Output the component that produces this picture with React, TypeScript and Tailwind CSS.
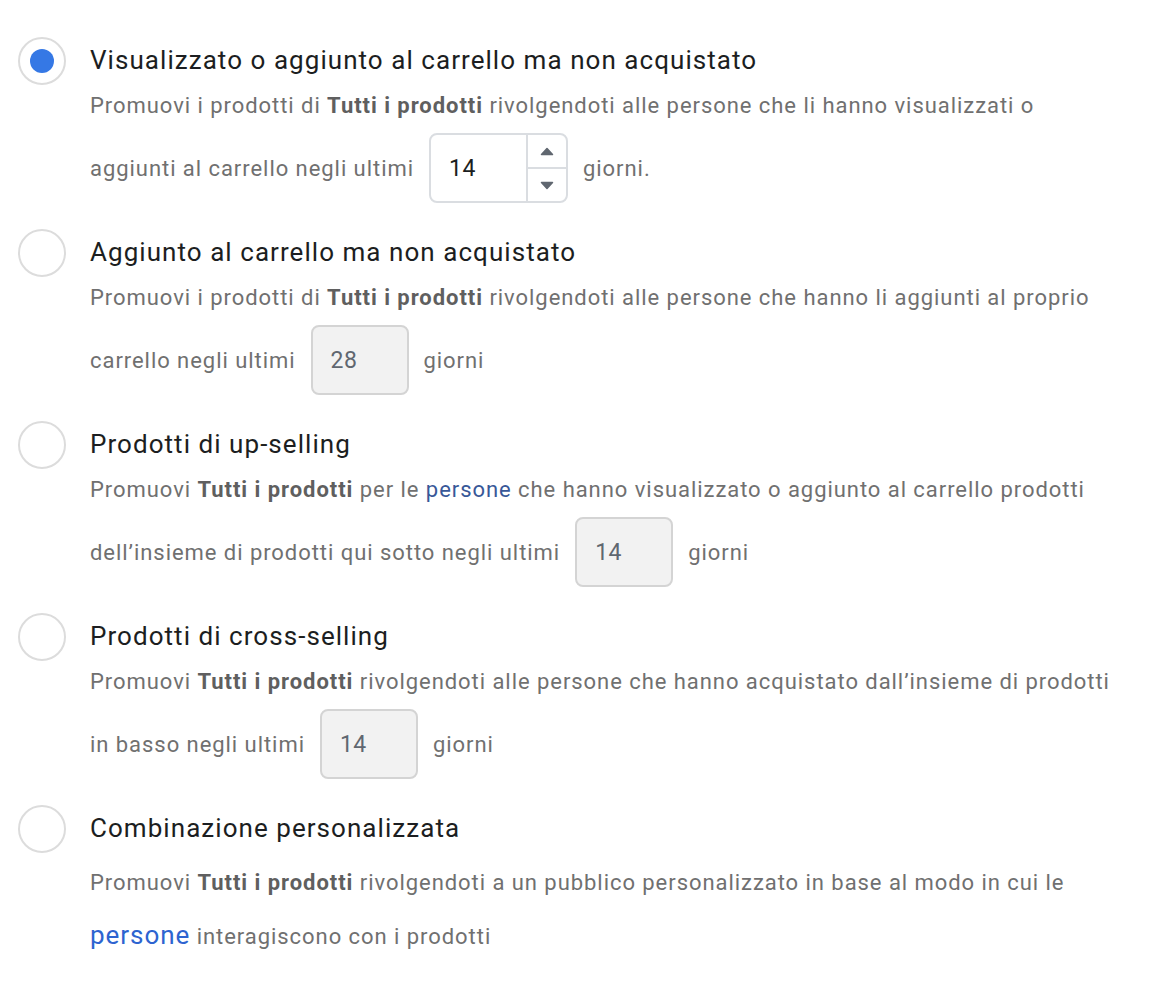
import React, { useState } from 'react';

type Option = {
  title: string;
  line1: React.ReactNode;
  line2: React.ReactNode;
  days?: number;
  after?: string;
  last?: boolean;
};

const B = ({ children }: { children: React.ReactNode }) => (
  <span className="font-bold text-[#5f5f5f]">{children}</span>
);

const Radio = ({ checked }: { checked: boolean }) => (
  <div className="w-12 h-12 shrink-0 rounded-full border-2 border-[#dcdcdc] bg-white flex items-center justify-center">
    {checked && <div className="w-6 h-6 rounded-full bg-[#3578e5]" />}
  </div>
);

const Spinner = ({ value }: { value: number }) => (
  <div className="flex h-[70px] w-[139px] rounded-lg border-2 border-[#dadde1] bg-white">
    <div className="flex-1 flex items-center pl-[18px] pt-[2px] text-[23px] tracking-[0.5px] text-[#1c1e21]">{value}</div>
    <div className="w-[40px] flex flex-col border-l-2 border-[#dadde1]">
      <div className="flex-1 flex items-center justify-center border-b-2 border-[#dadde1]">
        <svg width="14" height="9" viewBox="0 0 14 9">
          <path d="M7 1.5 L12.5 7.5 H1.5 Z" fill="#606770" stroke="#606770" strokeWidth="1.5" strokeLinejoin="round" />
        </svg>
      </div>
      <div className="flex-1 flex items-center justify-center">
        <svg width="14" height="9" viewBox="0 0 14 9">
          <path d="M7 7.5 L12.5 1.5 H1.5 Z" fill="#606770" stroke="#606770" strokeWidth="1.5" strokeLinejoin="round" />
        </svg>
      </div>
    </div>
  </div>
);

const Disabled = ({ value }: { value: number }) => (
  <div className="flex items-center h-[70px] w-[98px] rounded-lg border-2 border-[#d4d4d4] bg-[#f2f2f2] pl-[18px] pt-[2px] text-[23px] tracking-[0.5px] text-[#606770]">
    {value}
  </div>
);

const options: Option[] = [
  {
    title: 'Visualizzato o aggiunto al carrello ma non acquistato',
    line1: (<>Promuovi i prodotti di <B>Tutti i prodotti</B> rivolgendoti alle persone che li hanno visualizzati o</>),
    line2: 'aggiunti al carrello negli ultimi',
    days: 14,
    after: 'giorni.',
  },
  {
    title: 'Aggiunto al carrello ma non acquistato',
    line1: (<>Promuovi i prodotti di <B>Tutti i prodotti</B> rivolgendoti alle persone che hanno li aggiunti al proprio</>),
    line2: 'carrello negli ultimi',
    days: 28,
    after: 'giorni',
  },
  {
    title: 'Prodotti di up-selling',
    line1: (<>Promuovi <B>Tutti i prodotti</B> per le <span className="text-[#385898]">persone</span> che hanno visualizzato o aggiunto al carrello prodotti</>),
    line2: 'dell’insieme di prodotti qui sotto negli ultimi',
    days: 14,
    after: 'giorni',
  },
  {
    title: 'Prodotti di cross-selling',
    line1: (<>Promuovi <B>Tutti i prodotti</B> rivolgendoti alle persone che hanno acquistato dall’insieme di prodotti</>),
    line2: 'in basso negli ultimi',
    days: 14,
    after: 'giorni',
  },
  {
    title: 'Combinazione personalizzata',
    line1: (<>Promuovi <B>Tutti i prodotti</B> rivolgendoti a un pubblico personalizzato in base al modo in cui le</>),
    line2: (<><span className="text-[26px] text-[#2d64d0]">persone</span> interagiscono con i prodotti</>),
    last: true,
  },
];

export default function App() {
  const [selected] = useState(0);
  return (
    <div className="min-h-screen bg-white pt-[37px] pl-[18px] pr-4" style={{ fontFamily: 'Roboto, "Liberation Sans", sans-serif' }}>
      {options.map((o, i) => (
        <div key={i} className="flex gap-6 mb-[26px]">
          <Radio checked={i === selected} />
          <div className="flex flex-col pt-[7px] whitespace-nowrap">
            <div className="text-[26px] leading-[32px] tracking-[1.05px] text-[#1c1e21]">{o.title}</div>
            {o.last ? (
              <>
                <div className="mt-[24px] text-[22px] leading-[30px] tracking-[0.95px] text-[#707070]">{o.line1}</div>
                <div className="mt-[22px] text-[22px] leading-[30px] tracking-[0.95px] text-[#707070]">{o.line2}</div>
              </>
            ) : (
              <>
                <div className="mt-[15px] text-[22px] leading-[30px] tracking-[0.95px] text-[#707070]">{o.line1}</div>
                <div className="mt-[12px] flex items-center gap-[15px] text-[22px] tracking-[0.95px] text-[#707070]">
                  <span>{o.line2}</span>
                  {i === selected ? <Spinner value={o.days!} /> : <Disabled value={o.days!} />}
                  <span>{o.after}</span>
                </div>
              </>
            )}
          </div>
        </div>
      ))}
    </div>
  );
}
